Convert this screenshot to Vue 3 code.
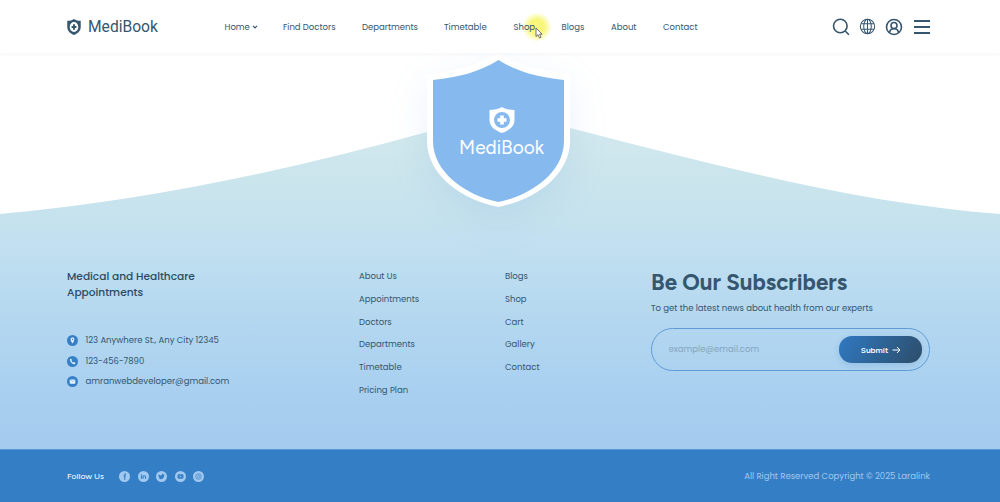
<template>
<div class="page">
    <header class="header">
        <a class="brand">
            <svg class="brand__icon" viewBox="0 0 26 26" preserveAspectRatio="none">
                <path fill="currentColor" fill-rule="evenodd" d="M13 0C16 2 21 3 25.500 3V13C25.500 20 19 24 13 26C7 24 .5 20 .5 13V3C5 3 10 2 13 0ZM13 5A8 8 0 1 0 13 21A8 8 0 1 0 13 5Z" />
                <path fill="currentColor" d="M11.200 8.500h3.600v2.700h2.700v3.600h-2.700v2.700h-3.600v-2.700H8.500v-3.600h2.700z" />
            </svg>
            <span class="brand__name">MediBook</span>
        </a>
        <nav class="nav">
            <a v-for="item in menu" :key="item" class="nav__link">
                <span>{{ item }}</span>
                <svg v-if="item === 'Home'" class="nav__arrow" viewBox="0 0 6 4"><path d="M1 .8L3 2.800L5 .8" /></svg>
            </a>
        </nav>
        <div class="tools">
            <svg class="tool" viewBox="0 0 18 18"><circle cx="8.300" cy="8" r="6.800" /><path d="M13.200 13L16.900 16.700" /></svg>
            <svg class="tool tool--globe" viewBox="0 0 18 18">
                <circle cx="9" cy="9" r="7.600" /><ellipse cx="9" cy="9" rx="4" ry="7.600" />
                <path d="M9 1.300V16.700M2.200 6H15.800M2.200 12H15.800" />
            </svg>
            <svg class="tool" viewBox="0 0 18 18">
                <circle cx="9" cy="9" r="7.500" /><circle cx="9" cy="7.500" r="3" /><path d="M4.500 14.800C4.800 9.300 13.200 9.300 13.500 14.800" />
            </svg>
            <span class="burger"><i></i><i></i><i></i></span>
        </div>
        <div class="pointer">
            <svg viewBox="0 0 8 12"><path d="M1 1V9.500L3 7.700L4.500 11L6 10.300L4.600 7.200H7.200Z" /></svg>
        </div>
    </header>

    <footer class="footer">
        <svg class="wave" viewBox="0 0 1000 396" preserveAspectRatio="none">
            <defs>
                <linearGradient id="sky" x1="0" y1="50" x2="0" y2="396" gradientUnits="userSpaceOnUse">
                    <stop offset="0" stop-color="#d5eaed" />
                    <stop offset=".34" stop-color="#c5e2ed" />
                    <stop offset=".39" stop-color="#c2e0f0" />
                    <stop offset=".8" stop-color="#aad1f0" />
                    <stop offset="1" stop-color="#a4caee" />
                </linearGradient>
            </defs>
            <path fill="url(#sky)" d="M0 161C145 148 290 117 427 79L498 58L570 75C715 112 860 151 1000 161V396H0Z" />
        </svg>
        <div class="emblem">
            <svg class="emblem__shape" viewBox="0 0 143 154">
                <path fill="#fff" d="M71.500 0C92 12 114 18 143 21V88C143 122 108 147 71.500 154C35 147 0 122 0 88V21C29 18 51 12 71.500 0Z" />
                <path fill="#86baef" d="M71.500 7C91 19 110 24 137 27V88C137 119 105 142 71.500 149C38 142 6 119 6 88V27C33 24 52 19 71.500 7Z" />
            </svg>
            <div class="emblem__logo">
                <svg class="emblem__icon" viewBox="0 0 26 26">
                    <path fill="currentColor" fill-rule="evenodd" d="M13 0C16 2 21 3 25.500 3V13C25.500 20 19 24 13 26C7 24 .5 20 .5 13V3C5 3 10 2 13 0ZM13 5A8 8 0 1 0 13 21A8 8 0 1 0 13 5Z" />
                    <path fill="currentColor" d="M11.200 8.500h3.600v2.700h2.700v3.600h-2.700v2.700h-3.600v-2.700H8.500v-3.600h2.700z" />
                </svg>
                <span>MediBook</span>
            </div>
        </div>

        <div class="footer__main">
            <section class="about">
                <h2 class="about__title">Medical and Healthcare<br>Appointments</h2>
                <ul class="contacts">
                    <li v-for="c in contacts" :key="c.text">
                        <svg viewBox="0 0 12 12">
                            <circle cx="6" cy="6" r="6" fill="#377fc7" />
                            <path v-if="c.icon === 'pin'" fill="#eaf6ff" fill-rule="evenodd" d="M6 2.800C3.200 2.800 3.500 6 6 9.300C8.500 6 8.800 2.800 6 2.800ZM6 4.200A.8 .8 0 1 0 6 5.800A.8 .8 0 1 0 6 4.200Z" />
                            <path v-else-if="c.icon === 'phone'" fill="#eaf6ff" d="M3.300 3.300L4.600 2.900L5.300 4.600L4.700 5.200Q5.300 6.500 6.700 7.300L7.400 6.600L9.100 7.400L8.700 8.700C6.500 9.800 2.600 6 3.300 3.300Z" />
                            <g v-else><rect x="3" y="3.800" width="6" height="4.600" rx=".8" fill="#eaf6ff" /><path d="M3.300 4.300L6 6L8.700 4.300" fill="none" stroke="#377fc7" stroke-width=".4" /></g>
                        </svg>
                        <span>{{ c.text }}</span>
                    </li>
                </ul>
            </section>
            <ul class="links">
                <li v-for="link in links" :key="link">{{ link }}</li>
            </ul>
            <ul class="links">
                <li v-for="link in moreLinks" :key="link">{{ link }}</li>
            </ul>
            <section class="subscribe">
                <h2 class="subscribe__title">Be Our Subscribers</h2>
                <p class="subscribe__text">To get the latest news about health from our experts</p>
                <form class="form" @submit.prevent>
                    <input v-model="email" type="text" placeholder="example@email.com">
                    <button>
                        Submit
                        <svg viewBox="0 0 9 8"><path d="M.5 4H8M5 1L8 4L5 7" /></svg>
                    </button>
                </form>
            </section>
        </div>

        <div class="bottom">
            <span class="bottom__follow">Follow Us</span>
            <div class="socials">
                <svg viewBox="0 0 12 12"><circle cx="6" cy="6" r="6" /><path class="ink" d="M6.300 9.500V3.900Q6.300 3.100 7.500 3.200M4.800 5.500H7.400" /></svg>
                <svg viewBox="0 0 12 12"><circle cx="6" cy="6" r="6" /><path class="ink" d="M3.700 5V8.500M3.700 3.200V4M5.500 8.500V5M5.500 6.200C5.700 4.800 8.200 4.700 8.200 6.300V8.500" /></svg>
                <svg viewBox="0 0 12 12"><circle cx="6" cy="6" r="6" /><path class="solid" d="M2.800 8.200C4 8.200 4.300 7.900 4.500 7.700C3.700 7.500 3.400 7 3.300 6.700C2.700 6.200 2.600 5.600 2.700 5.300C2.500 4.600 2.700 4 3 3.600C4 4.700 4.900 5 6 5C5.700 3.500 7.200 2.800 8.200 3.700L9.300 3.500L8.900 4.500C8.900 8.500 5.500 9.900 2.800 8.200Z" /></svg>
                <svg viewBox="0 0 12 12"><circle cx="6" cy="6" r="6" /><rect class="solid" x="2.800" y="3.600" width="6.400" height="4.800" rx="1.200" /><path fill="#a1c8ee" d="M5.200 4.800L7.300 6L5.200 7.200Z" /></svg>
                <svg viewBox="0 0 12 12"><circle cx="6" cy="6" r="6" /><rect class="ink thin" x="3.200" y="3.200" width="5.600" height="5.600" rx="1.500" /><circle class="ink thin" cx="6" cy="6" r="1.300" /><circle class="solid" cx="7.600" cy="4.400" r=".35" /></svg>
            </div>
            <span class="bottom__copy">All Right Reserved Copyright © 2025 Laralink</span>
        </div>
    </footer>
</div>
</template>

<script setup>
import { ref } from 'vue'
const email = ref('')
const menu = ['Home', 'Find Doctors', 'Departments', 'Timetable', 'Shop', 'Blogs', 'About', 'Contact']
const links = ['About Us', 'Appointments', 'Doctors', 'Departments', 'Timetable', 'Pricing Plan']
const moreLinks = ['Blogs', 'Shop', 'Cart', 'Gallery', 'Contact']
const contacts = [
    { icon: 'pin', text: '123 Anywhere St., Any City 12345' },
    { icon: 'phone', text: '123-456-7890' },
    { icon: 'mail', text: 'amranwebdeveloper@gmail.com' }
]
</script>

<style>
body{
    margin: 0;
    background: #fff;
}
</style>

<style scoped>
*{
    box-sizing: border-box;
}
.page{
    height: 502px;
    display: flex;
    flex-direction: column;
    overflow: hidden;
    font-family: Poppins, Inter, sans-serif;
    font-size: 8.5px;
    color: #34566f;
}
svg{
    display: block;
}
ul, h2, p{
    margin: 0;
    padding: 0;
    list-style: none;
}
.header{
    position: relative;
    z-index: 2;
    flex: none;
    height: 53px;
    padding: 0 70px 0 67px;
    display: flex;
    align-items: center;
    background: #fff;
    box-shadow: 0 1px 4px rgba(60, 70, 90, 0.06);
}
.brand{
    width: 157.5px;
    display: flex;
    align-items: center;
    gap: 7px;
}
.brand__icon{
    width: 14px;
    height: 16px;
}
.brand__name{
    font-family: Roboto, sans-serif;
    font-size: 15.6px;
    line-height: 20px;
    padding-top: 1px;
}
.nav{
    display: grid;
    grid-template-columns: 58.5px 79px 82px 69.5px 48px 49.5px 52px 50px;
    line-height: 14px;
}
.nav__link{
    display: flex;
    align-items: center;
    gap: 2px;
    white-space: nowrap;
}
.nav__arrow{
    width: 6px;
    height: 4px;
    fill: none;
    stroke: currentColor;
    stroke-width: 1.2;
}
.tools{
    margin-left: auto;
    display: flex;
    align-items: center;
    gap: 9px;
}
.tool{
    width: 18px;
    height: 18px;
    fill: none;
    stroke: currentColor;
    stroke-width: 1.6;
}
.tool--globe{
    width: 17px;
    height: 17px;
    stroke-width: 1.1;
}
.burger{
    width: 16px;
    height: 14px;
    margin-left: 2px;
    display: flex;
    flex-direction: column;
    justify-content: space-between;
}
.burger i{
    height: 2px;
    background: #34566f;
}
.pointer{
    position: absolute;
    z-index: -1;
    left: 522px;
    top: 12px;
    width: 30px;
    height: 30px;
    border-radius: 50%;
    background: radial-gradient(circle, rgba(246, 244, 80, 0.75) 35%, rgba(248, 244, 70, 0) 70%);
}
.pointer svg{
    width: 8px;
    height: 12px;
    margin: 15px 0 0 13px;
    fill: #fff;
    stroke: #554e55;
    stroke-width: .8;
}
.footer{
    position: relative;
    flex: 1;
    display: flex;
    flex-direction: column;
}
.wave{
    position: absolute;
    left: 0;
    top: 0;
    width: 100%;
    height: 396px;
}
.emblem{
    position: absolute;
    left: 427px;
    top: 0;
    width: 143px;
    height: 154px;
}
.emblem__shape{
    width: 143px;
    height: 154px;
    filter: drop-shadow(0 12px 18px rgba(80, 140, 210, 0.12));
}
.emblem__logo{
    position: absolute;
    left: 0;
    right: 0;
    top: 54px;
    padding-left: 6px;
    display: flex;
    flex-direction: column;
    align-items: center;
    color: #fff;
    font-family: Figtree, Lato, sans-serif;
    font-size: 19px;
    line-height: 30px;
}
.emblem__icon{
    width: 26px;
    height: 26px;
}
.footer__main{
    position: relative;
    height: 396px;
    padding: 216px 70px 0 67px;
    display: grid;
    grid-template-columns: 292px 146px 146px 279px;
    align-items: start;
}
.about__title{
    font-size: 10.6px;
    font-weight: 500;
    line-height: 16px;
    color: #2b4b64;
}
.contacts{
    margin-top: 29.500px;
}
.contacts li{
    height: 20.6px;
    display: flex;
    align-items: center;
    gap: 7.5px;
}
.contacts svg{
    width: 11px;
    height: 11px;
}
.links li{
    height: 22.8px;
    line-height: 14px;
}
.subscribe__title{
    font-family: Figtree, Lato, sans-serif;
    font-size: 22.3px;
    font-weight: 700;
    line-height: 28px;
    white-space: nowrap;
}
.subscribe__text{
    margin-top: 4px;
    line-height: 14px;
    white-space: nowrap;
}
.form{
    height: 43px;
    margin-top: 13px;
    padding: 0 7px 0 16.5px;
    display: flex;
    align-items: center;
    border: 1px solid #5f9cd6;
    border-radius: 22px;
}
.form input{
    flex: 1;
    min-width: 0;
    padding: 0;
    border: 0;
    outline: 0;
    background: none;
    font: inherit;
}
.form input::placeholder{
    color: #86a5bd;
}
.form button{
    width: 83px;
    height: 27px;
    padding: 0 0 0 1px;
    display: flex;
    align-items: center;
    justify-content: center;
    gap: 4px;
    border: 0;
    border-radius: 13px;
    background: linear-gradient(120deg, #3079c2, #2d4d69);
    box-shadow: 0 2px 6px rgba(50, 110, 170, 0.2);
    color: #fff;
    font: 600 8.4px Figtree, Lato, sans-serif;
}
.form button svg{
    width: 9px;
    height: 8px;
    fill: none;
    stroke: #fff;
}
.bottom{
    position: relative;
    flex: 1;
    padding: 0 70px 0 67px;
    display: flex;
    align-items: center;
    border-top: 1px solid #5598d8;
    background: #347ec5;
    color: #a1c8ee;
}
.bottom__follow{
    width: 52px;
    color: #e8f5ff;
    font-family: Figtree, Lato, sans-serif;
    font-size: 8.5px;
    font-weight: 500;
    white-space: nowrap;
}
.socials{
    display: flex;
    gap: 7.6px;
}
.socials svg{
    width: 11px;
    height: 11px;
    fill: #a1c8ee;
}
.socials .ink{
    fill: none;
    stroke: #347ec5;
    stroke-width: 1.2;
}
.socials .thin{
    stroke-width: .7;
}
.socials .solid{
    fill: #347ec5;
}
.bottom__copy{
    margin-left: auto;
}
</style>
